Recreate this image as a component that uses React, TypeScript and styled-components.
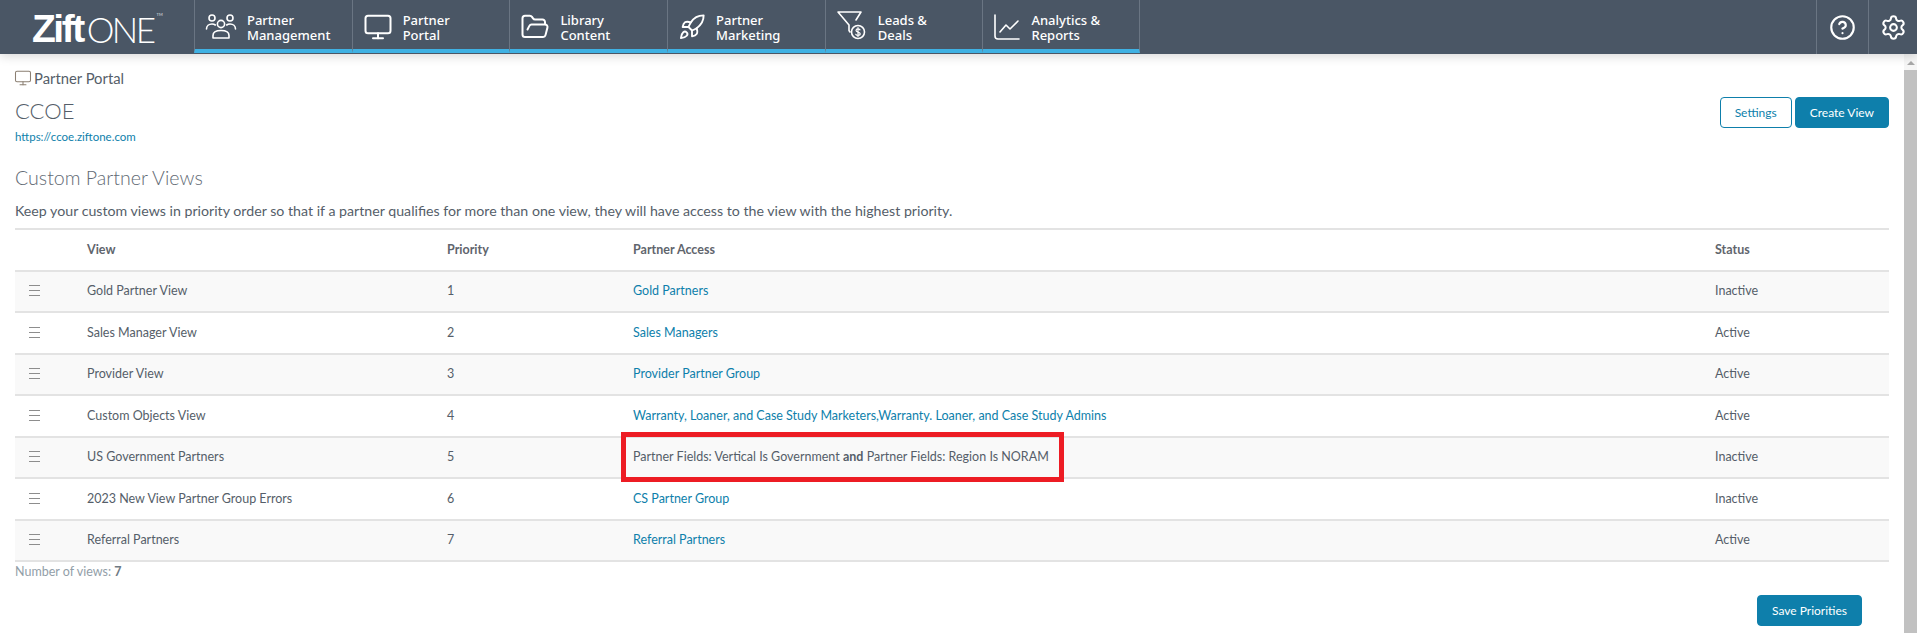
import React from "react";
import styled, { createGlobalStyle } from "styled-components";
import { CircleHelp, FolderOpen, Monitor, Rocket, Settings } from "lucide-react";

const GlobalStyle = createGlobalStyle`
  html, body { margin: 0; padding: 0; height: 100%; overflow: hidden; background: #fff; }
  #root { height: 100%; }
  body { font-family: Lato, "Open Sans", sans-serif; color: #555e69; }
`;

const PartnersIcon = () => (
  <svg width="32" height="30" viewBox="0 0 32 30" fill="none" stroke="currentColor" strokeWidth="1.6" strokeLinecap="round" strokeLinejoin="round">
    <circle cx="7" cy="6" r="3" />
    <circle cx="25" cy="6" r="3" />
    <circle cx="16" cy="12" r="3.6" />
    <path d="M1.5 17c0-3 2.4-5 5.5-5 1.300 0 2.400.3 3.300 1" />
    <path d="M30.500 17c0-3-2.400-5-5.500-5-1.300 0-2.400.3-3.300 1" />
    <path d="M8 26v-2.500c0-3 2.800-5 8-5s8 2 8 5V26z" />
  </svg>
);

const FunnelIcon = () => (
  <svg width="32" height="34" viewBox="0 0 32 34" fill="none" stroke="currentColor" strokeWidth="1.6" strokeLinecap="round" strokeLinejoin="round">
    <path d="M14 22 L13 20.500 V15 L2 2 H25 L20 10" />
    <circle cx="22" cy="22" r="6.500" />
    <path d="M24 19.800c-.5-.7-1.200-1-2-1-1.200 0-2 .6-2 1.600 0 2.200 4.200 1.200 4.200 3.400 0 1-.9 1.600-2.200 1.600-.9 0-1.700-.4-2.200-1.100M22 17.500v9" strokeWidth="1.200" />
  </svg>
);

const ChartIcon = () => (
  <svg width="28" height="28" viewBox="0 0 28 28" fill="none" stroke="currentColor" strokeWidth="1.6" strokeLinecap="round" strokeLinejoin="round">
    <path d="M2 2v21a3 3 0 0 0 3 3h21" />
    <path d="M7 19l6-7 4 4 8-8" />
  </svg>
);

const navItems = [
  { first: "Partner", second: "Management", icon: <PartnersIcon /> },
  { first: "Partner", second: "Portal", icon: <Monitor size={30} strokeWidth={1.6} /> },
  { first: "Library", second: "Content", icon: <FolderOpen size={30} strokeWidth={1.6} /> },
  { first: "Partner", second: "Marketing", icon: <Rocket size={28} strokeWidth={1.6} /> },
  { first: "Leads &", second: "Deals", icon: <FunnelIcon /> },
  { first: "Analytics &", second: "Reports", icon: <ChartIcon /> },
];

const rows = [
  { name: "Gold Partner View", access: "Gold Partners", status: "Inactive" },
  { name: "Sales Manager View", access: "Sales Managers", status: "Active" },
  { name: "Provider View", access: "Provider Partner Group", status: "Active" },
  { name: "Custom Objects View", access: "Warranty, Loaner, and Case Study Marketers,Warranty. Loaner, and Case Study Admins", status: "Active" },
  { name: "US Government Partners", access: null, status: "Inactive" },
  { name: "2023 New View Partner Group Errors", access: "CS Partner Group", status: "Inactive" },
  { name: "Referral Partners", access: "Referral Partners", status: "Active" },
];

const App = () => {
  return (
    <Page>
      <GlobalStyle />
      <NavBar>
        <Logo>
          <LogoBold>Zift</LogoBold>
          <LogoThin>ONE</LogoThin>
          <LogoMark>TM</LogoMark>
        </Logo>
        <NavItems>
          {navItems.map((item) => (
            <NavItem key={item.first + item.second}>
              <NavIcon>{item.icon}</NavIcon>
              <NavLabel>
                {item.first}
                <br />
                {item.second}
              </NavLabel>
            </NavItem>
          ))}
        </NavItems>
        <NavRight>
          <NavAction>
            <CircleHelp size={27} strokeWidth={1.9} />
          </NavAction>
          <NavAction>
            <Settings size={27} strokeWidth={1.8} />
          </NavAction>
        </NavRight>
      </NavBar>
      <Body>
        <Content>
          <TopRow>
            <div>
              <Crumb>
                <Monitor size={18} strokeWidth={1.4} color="#8b7f72" />
                Partner Portal
              </Crumb>
              <Title>CCOE</Title>
              <UrlLink>https://ccoe.ziftone.com</UrlLink>
            </div>
            <TopActions>
              <Button $outline>Settings</Button>
              <Button>Create View</Button>
            </TopActions>
          </TopRow>
          <Heading>Custom Partner Views</Heading>
          <Description>
            Keep your custom views in priority order so that if a partner qualifies for more than one view, they will have access to the view with the highest priority.
          </Description>
          <Table>
            <colgroup>
              <col width="72" />
              <col width="360" />
              <col width="186" />
              <col width="1082" />
              <col />
            </colgroup>
            <thead>
              <tr>
                <Th />
                <Th>View</Th>
                <Th>Priority</Th>
                <Th>Partner Access</Th>
                <Th>Status</Th>
              </tr>
            </thead>
            <tbody>
              {rows.map((row, i) => (
                <Row key={row.name}>
                  <Td>
                    <Handle />
                  </Td>
                  <Td>{row.name}</Td>
                  <Td>{i + 1}</Td>
                  <Td>
                    {row.access ? (
                      <AccessLink>{row.access}</AccessLink>
                    ) : (
                      <Highlighted>
                        Partner Fields: Vertical Is Government <b>and</b> Partner Fields: Region Is NORAM
                      </Highlighted>
                    )}
                  </Td>
                  <Td>{row.status}</Td>
                </Row>
              ))}
            </tbody>
          </Table>
          <ViewCount>
            Number of views: <b>7</b>
          </ViewCount>
          <Footer>
            <Button>Save Priorities</Button>
          </Footer>
        </Content>
        <ScrollRail>
          <ScrollArrow />
          <ScrollThumb />
        </ScrollRail>
      </Body>
    </Page>
  );
};

export default App;

const Page = styled.div`
  height: 100%;
  display: flex;
  flex-direction: column;
`;
const NavBar = styled.header`
  height: 54px;
  flex: none;
  display: flex;
  background: #4a5665;
  color: #fff;
  position: relative;
  z-index: 2;
  box-shadow: 0 2px 10px rgba(0, 0, 0, 0.16);
`;
const Logo = styled.div`
  width: 194px;
  flex: none;
  box-sizing: border-box;
  padding: 4px 0 0 32px;
  display: flex;
  align-items: center;
  white-space: nowrap;
`;
const LogoBold = styled.span`
  font-family: "Liberation Sans", sans-serif;
  font-weight: 700;
  font-size: 39px;
  letter-spacing: -2.5px;
`;
const LogoThin = styled.span`
  font-family: Lato, sans-serif;
  font-weight: 300;
  font-size: 35px;
  letter-spacing: -2.500px;
  margin-left: 4px;
`;
const LogoMark = styled.span`
  font-size: 4px;
  align-self: flex-start;
  margin: 8px 0 0 3px;
  opacity: 0.8;
`;
const NavItems = styled.nav`
  display: flex;
`;
const NavItem = styled.div`
  width: 157.700px;
  box-sizing: border-box;
  display: flex;
  align-items: center;
  gap: 10px;
  padding: 5px 0 0 10px;
  margin-bottom: 1px;
  border-left: 1px solid #6a7583;
  border-bottom: 4px solid #3fb1e3;
  &:last-child {
    border-right: 1px solid #6a7583;
  }
`;
const NavIcon = styled.div`
  flex: none;
  display: flex;
`;
const NavLabel = styled.div`
  font-family: "Noto Sans", sans-serif;
  font-size: 13px;
  font-weight: 500;
  line-height: 15px;
  white-space: nowrap;
  margin-top: 2px;
`;
const NavRight = styled.div`
  margin-left: auto;
  display: flex;
`;
const NavAction = styled.div`
  width: 52px;
  box-sizing: border-box;
  display: flex;
  align-items: center;
  justify-content: center;
  border-left: 1px solid #6a7583;
  padding-top: 1px;
  &:last-child {
    width: 49px;
  }
`;
const Body = styled.div`
  flex: 1;
  min-height: 0;
  display: flex;
`;
const Content = styled.main`
  flex: 1;
  min-width: 0;
  box-sizing: border-box;
  padding: 15px 15px 0 15px;
`;
const TopRow = styled.div`
  display: flex;
  justify-content: space-between;
  align-items: flex-start;
`;
const Crumb = styled.div`
  display: flex;
  align-items: center;
  gap: 2px;
  font-size: 14.800px;
  line-height: 17px;
  margin-left: -1px;
  color: #555e69;
`;
const Title = styled.h1`
  margin: 10px 0 0;
  font-size: 22px;
  line-height: 27px;
  font-weight: 300;
  color: #555e69;
`;
const UrlLink = styled.a`
  display: block;
  margin-top: 6px;
  font-size: 11.500px;
  line-height: 14px;
  color: #0e7fab;
`;
const TopActions = styled.div`
  display: flex;
  gap: 3px;
  margin-top: 28px;
`;
const Button = styled.button<{ $outline?: boolean }>`
  height: 31px;
  padding: 0 14px;
  border: 1px solid #0e7fab;
  border-radius: 4px;
  font-family: Lato, sans-serif;
  font-size: 12px;
  background: ${(p) => (p.$outline ? "#fff" : "#0e7fab")};
  color: ${(p) => (p.$outline ? "#0e7fab" : "#fff")};
`;
const Heading = styled.h2`
  margin: 22px 0 0;
  font-size: 19.600px;
  line-height: 24px;
  font-weight: 300;
  color: #626a74;
`;
const Description = styled.p`
  margin: 12px 0 0;
  font-size: 14.200px;
  line-height: 18px;
  color: #555e69;
`;
const Table = styled.table`
  width: 100%;
  margin-top: 8px;
  border-collapse: collapse;
  table-layout: fixed;
  font-size: 12.500px;
  border-top: 2px solid #e3e3e3;
`;
const Th = styled.th`
  height: 39.500px;
  padding: 0;
  text-align: left;
  font-weight: 700;
  color: #5f656d;
  border-bottom: 2px solid #e3e3e3;
`;
const Row = styled.tr`
  &:nth-child(odd) {
    background: #f9f9f9;
  }
`;
const Td = styled.td`
  height: 38.500px;
  padding: 0 0 1px;
  color: #555e69;
  border-bottom: 2px solid #e3e3e3;
`;
const Handle = styled.div`
  width: 11px;
  height: 9px;
  margin-left: 14px;
  border-top: 1px solid #8d8d8d;
  border-bottom: 1px solid #8d8d8d;
  position: relative;
  &::after {
    content: "";
    position: absolute;
    left: 0;
    right: 0;
    top: 4px;
    border-top: 1px solid #8d8d8d;
  }
`;
const AccessLink = styled.a`
  color: #0e7fab;
`;
const Highlighted = styled.span`
  position: relative;
  display: inline-block;
  &::after {
    content: "";
    position: absolute;
    left: -12px;
    right: -15px;
    top: -17px;
    bottom: -18px;
    border: 5px solid #ed1c24;
  }
`;
const ViewCount = styled.div`
  margin-top: 2px;
  font-size: 12.500px;
  line-height: 15px;
  color: #929ea8;
  b {
    color: #6f7a84;
  }
`;
const Footer = styled.div`
  display: flex;
  justify-content: flex-end;
  padding-right: 27px;
  margin-top: 16px;
`;
const ScrollRail = styled.div`
  width: 13px;
  flex: none;
  display: flex;
  flex-direction: column;
  background: #f6f6f6;
`;
const ScrollArrow = styled.div`
  height: 16px;
  flex: none;
  position: relative;
  &::after {
    content: "";
    position: absolute;
    left: 3px;
    top: 7px;
    border: 4px solid transparent;
    border-top: 0;
    border-bottom: 4px solid #a8a8a8;
  }
`;
const ScrollThumb = styled.div`
  flex: 1;
  background: #c1c1c1;
`;
